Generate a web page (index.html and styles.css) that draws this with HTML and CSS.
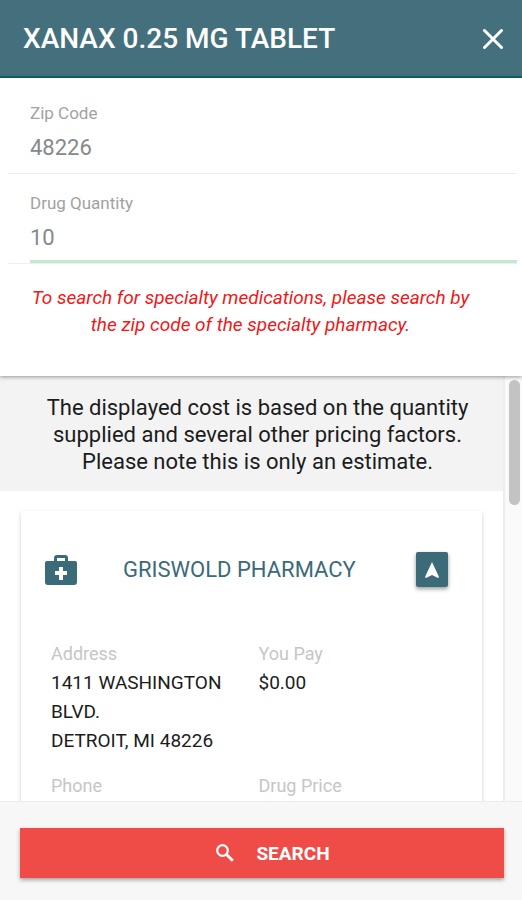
FILE: index.html
```html
<!DOCTYPE html>
<html lang="en">
<head>
<meta charset="utf-8">
<meta name="viewport" content="width=device-width, initial-scale=1">
<title>Drug pricing</title>
<link rel="stylesheet" href="styles.css">
</head>
<body>
<header class="bar">
  <h1 class="title">XANAX 0.25 MG TABLET</h1>
  <button class="close" type="button" aria-label="Close">
    <svg viewBox="0 0 20 20" width="20" height="20" fill="none" stroke="currentColor" stroke-width="3" stroke-linecap="round"><path d="M1.5 1.5l17 17M18.500 1.500L1.500 18.500"/></svg>
  </button>
</header>
<form class="form" id="search">
  <div class="field">
    <label class="label" for="zip">Zip Code</label>
    <input class="input" id="zip" type="text" value="48226">
  </div>
  <div class="field field-active">
    <label class="label" for="quantity">Drug Quantity</label>
    <input class="input" id="quantity" type="text" value="10">
  </div>
  <p class="hint">To search for specialty medications, please search by the zip code of the specialty pharmacy.</p>
</form>
<main class="results">
  <div class="list">
    <p class="notice">The displayed cost is based on the quantity supplied and several other pricing factors. Please note this is only an estimate.</p>
    <article class="card">
      <div class="card-head">
        <svg class="kit" viewBox="0 0 32 30" width="32" height="30"><path fill="currentColor" fill-rule="evenodd" d="M9 6V3a3 3 0 0 1 3-3h8a3 3 0 0 1 3 3v3h7a2 2 0 0 1 2 2v19a3 3 0 0 1-3 3H3a3 3 0 0 1-3-3V8a2 2 0 0 1 2-2zM12 6h8V3h-8zM14 12v4h-4v4h4v5h4v-5h4v-4h-4v-4z"/></svg>
        <h2 class="name">GRISWOLD PHARMACY</h2>
        <button class="locate" type="button" aria-label="Directions">
          <svg viewBox="0 0 14 16" width="14" height="16"><path fill="currentColor" d="M7 0l7 15-1 1-6-3-6 3-1-1z"/></svg>
        </button>
      </div>
      <dl class="details">
        <div class="detail"><dt>Address</dt><dd>1411 WASHINGTON BLVD.<br>DETROIT, MI 48226</dd></div>
        <div class="detail"><dt>You Pay</dt><dd>$0.00</dd></div>
        <div class="detail"><dt>Phone</dt></div>
        <div class="detail"><dt>Drug Price</dt></div>
      </dl>
    </article>
  </div>
  <div class="rail"><div class="thumb"></div></div>
</main>
<footer class="footer">
  <button class="submit" type="submit" form="search">
    <svg viewBox="0 0 18 18" width="18" height="18" fill="none" stroke="currentColor"><circle cx="6.5" cy="6.5" r="5.3" stroke-width="2.2"/><path d="M10.5 10.5l6.3 6.3" stroke-width="2.8"/></svg>
    <span>SEARCH</span>
  </button>
</footer>
</body>
</html>
```
FILE: styles.css
```css
* {
  box-sizing: border-box;
}

body {
  margin: 0;
  height: 100vh;
  display: flex;
  flex-direction: column;
  overflow: hidden;
  background: #fff;
  color: #1c1c1c;
  font-family: Roboto, "Liberation Sans", sans-serif;
}

h1, h2, p, dl, dd {
  margin: 0;
}

button {
  padding: 0;
  border: 0;
  font-family: inherit;
}

svg {
  display: block;
}

.bar {
  display: flex;
  align-items: center;
  justify-content: space-between;
  height: 78px;
  padding: 2px 19px 0 23px;
  background: #44707e;
  border-bottom: 2px solid #13606b;
  color: #fff;
}

.title {
  font-size: 28px;
  line-height: 36px;
  font-weight: 500;
}

.close {
  background: none;
  color: inherit;
}

.form {
  position: relative;
  z-index: 1;
  padding: 0 5px 38px 8px;
  background: #fff;
  box-shadow: 0 1px 4px rgba(0, 0, 0, 0.4);
}

.field {
  display: flex;
  flex-direction: column;
  padding: 24px 0 9px 22px;
  border-bottom: 1px solid #ebf1f1;
}

.field-active {
  padding: 18px 0 0 22px;
}

.field-active .input {
  height: 49px;
  padding-bottom: 5px;
  border-bottom: 3px solid #c5e8cd;
}

.label {
  font-size: 17px;
  line-height: 22px;
  color: #a2a2a2;
}

.input {
  width: 100%;
  height: 40px;
  padding: 6px 0 0;
  border: 0;
  outline: 0;
  background: none;
  font: 22px/28px Roboto, "Liberation Sans", sans-serif;
  color: #85898c;
}

.hint {
  padding: 20px 42px 0 18px;
  font-size: 19px;
  line-height: 27px;
  font-style: italic;
  text-align: center;
  color: #f01818;
}

.results {
  flex: 1;
  min-height: 0;
  display: flex;
}

.list {
  flex: 1;
  overflow-y: auto;
  scrollbar-width: none;
}

.notice {
  padding: 18px 28px 16px 40px;
  background: #f3f3f3;
  font-size: 22px;
  line-height: 27px;
  text-align: center;
}

.card {
  margin: 20px 21px;
  padding: 41px 34px 24px 24px;
  box-shadow: 0 2px 4px rgba(0, 0, 0, 0.2);
}

.card-head {
  display: flex;
  align-items: center;
  color: #3b6a79;
}

.name {
  margin: 0 auto 0 46px;
  font-size: 22px;
  line-height: 28px;
  font-weight: 400;
}

.locate {
  display: grid;
  place-items: center;
  width: 32px;
  height: 35px;
  border-radius: 2px;
  background: #3b6a79;
  color: #fff;
  box-shadow: 0 2px 4px rgba(0, 0, 0, 0.4);
}

.details {
  display: grid;
  grid-template-columns: 1fr 1fr;
  column-gap: 18px;
  row-gap: 16px;
  padding: 52px 0 0 6px;
}

.detail {
  line-height: 29px;
}

dt {
  font-size: 18px;
  color: #c6c6c6;
}

dd {
  font-size: 19px;
}

.rail {
  width: 19px;
  padding: 4px 3px 4px 4px;
  border-left: 2px solid #ededed;
  background: #fafafa;
}

.thumb {
  width: 11px;
  height: 30%;
  border-radius: 6px;
  background: #c3c3c3;
}

.footer {
  padding: 26px 18px 22px 20px;
  border-top: 1px solid #ececec;
  background: #f7f7f7;
}

.submit {
  display: flex;
  align-items: center;
  justify-content: center;
  gap: 22px;
  width: 100%;
  height: 50px;
  padding-left: 22px;
  background: #ef4c48;
  color: #fff;
  font-size: 19px;
  font-weight: 700;
  box-shadow: 0 2px 4px rgba(0, 0, 0, 0.35);
}
```
